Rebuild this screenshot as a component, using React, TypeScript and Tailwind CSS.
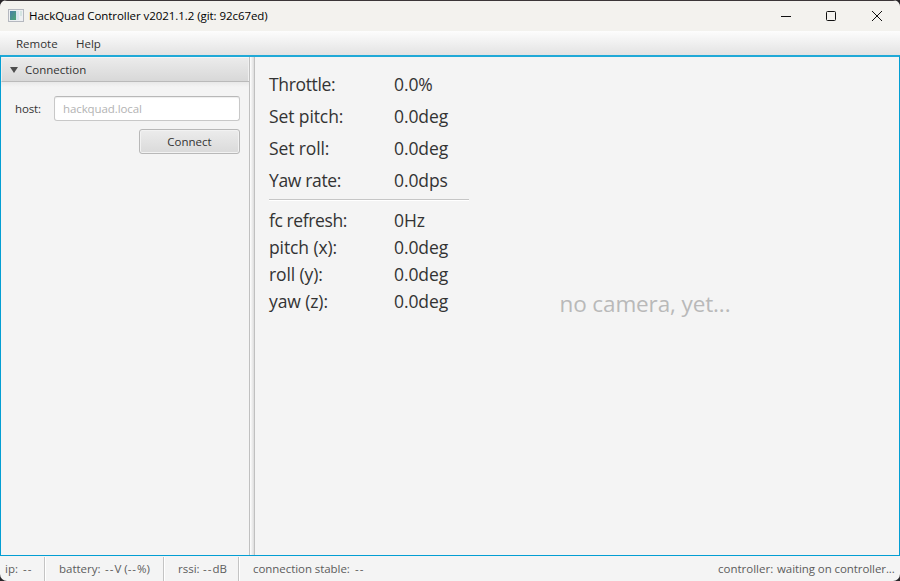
type Row = { label: string; value: string; tracking: string };

const setpoints: Row[] = [
  { label: 'Throttle:', value: '0.0%', tracking: 'tracking-[-0.35px]' },
  { label: 'Set pitch:', value: '0.0deg', tracking: 'tracking-[-0.1px]' },
  { label: 'Set roll:', value: '0.0deg', tracking: 'tracking-[-0.12px]' },
  { label: 'Yaw rate:', value: '0.0dps', tracking: 'tracking-[-0.35px]' },
];

const attitude: Row[] = [
  { label: 'fc refresh:', value: '0Hz', tracking: 'tracking-[-0.4px]' },
  { label: 'pitch (x):', value: '0.0deg', tracking: 'tracking-[-0.1px]' },
  { label: 'roll (y):', value: '0.0deg', tracking: 'tracking-[-0.1px]' },
  { label: 'yaw (z):', value: '0.0deg', tracking: 'tracking-[-0.1px]' },
];

function TitleBar() {
  return (
    <header className="flex h-[31px] shrink-0 items-center border-t border-[#3b3638] bg-[#f3f2ee] text-black">
      <svg className="mb-[2px] ml-2 h-[14px] w-4 shrink-0" viewBox="0 0 16 14">
        <defs>
          <linearGradient id="screen" x1="0" y1="0" x2="1" y2="1">
            <stop offset="0" stopColor="#4a80a8" />
            <stop offset="1" stopColor="#4fa575" />
          </linearGradient>
        </defs>
        <rect x="0.5" y="1.5" width="15" height="12" fill="#eef0f2" stroke="#b5b8bf" />
        <rect x="2" y="3" width="6" height="9" fill="url(#screen)" />
        <rect x="8" y="3" width="3" height="9" fill="#dce6ee" />
        <rect x="12" y="3" width="2" height="5" fill="#d5e5e2" />
      </svg>
      <span className="ml-[5px] text-[11.5px] tracking-[-0.06px]">HackQuad Controller v2021.1.2 (git: 92c67ed)</span>
      <svg className="mr-[17px] mb-px ml-auto h-3 w-[103px] shrink-0" viewBox="0 0 103 12" fill="none" stroke="#111">
        <path d="M1 6.5h10" />
        <rect x="46.5" y="1.5" width="9" height="9" rx="1" />
        <path d="M92 1l10 10M102 1L92 11" />
      </svg>
    </header>
  );
}

function Sidebar() {
  return (
    <aside className="w-[248px] shrink-0">
      <div className="flex h-[25px] items-center border-b border-l border-b-[#bababa] border-l-[#ededed] bg-linear-to-b from-[#ececec] to-[#d8d8d8] pt-px shadow-[inset_0_1px_0_#f5f5f5,inset_-1px_0_0_#f0f0f0]">
        <svg className="ml-2 h-[6px] w-[8px]" viewBox="0 0 8 6">
          <path d="M0 0h8L4 6z" fill="#4d4d4d" />
        </svg>
        <span className="ml-[7px]">Connection</span>
      </div>
      <div className="h-[5px] bg-linear-to-b from-[#e9e9e9] to-[#f4f4f4]" />
      <div className="flex flex-col items-end pt-[9px] pr-[9px]">
        <div className="flex w-full items-center pl-[14px]">
          <label className="w-[39px] tracking-[-0.15px]">host:</label>
          <div className="flex h-[25px] flex-1 items-center rounded-[3px] border border-[#c8c8c8] border-t-[#b8b8b8] bg-white pl-2 tracking-[-0.1px] text-[#b3b3b3] shadow-[inset_0_1px_1px_#eee]">
            hackquad.local
          </div>
        </div>
        <button className="mt-[8px] h-[25px] w-[101px] rounded-[3px] border border-[#b8b8b8] bg-linear-to-b from-[#ececec] to-[#dadada] shadow-[inset_0_0_0_1px_#f2f2f2]">
          Connect
        </button>
      </div>
    </aside>
  );
}

function Readings({ rows, rowClass }: { rows: Row[]; rowClass: string }) {
  return (
    <>
      {rows.map((row) => (
        <div key={row.label} className={`flex items-center ${rowClass}`}>
          <span className={`w-[125px] ${row.tracking}`}>{row.label}</span>
          <span className="tracking-[-0.1px]">{row.value}</span>
        </div>
      ))}
    </>
  );
}

function Separator() {
  return <div className="h-[24px] w-[2px] shrink-0 border-l border-[#c4c4c4] bg-white" />;
}

function StatusBar() {
  return (
    <footer className="flex h-[25px] shrink-0 items-center border-t border-[#f4f4f4] text-[#5c5c5c]">
      <div className="flex w-[44px] pl-[5px]">
        <span className="w-[18px]">ip:</span>
        <span className="tracking-[1px]">--</span>
      </div>
      <Separator />
      <div className="flex w-[117px] pl-[13px]">
        <span className="w-[46px]">battery:</span>
        <span>
          <span className="tracking-[1px]">--</span>V (<span className="tracking-[1px]">--</span>%)
        </span>
      </div>
      <Separator />
      <div className="flex w-[73px] pl-[13px]">
        <span className="w-[25px]">rssi:</span>
        <span>
          <span className="tracking-[1px]">--</span>dB
        </span>
      </div>
      <Separator />
      <div className="flex pl-[13px]">
        <span className="w-[102px] tracking-[-0.06px]">connection stable:</span>
        <span className="tracking-[1px]">--</span>
      </div>
      <div className="ml-auto flex w-[182px]">
        <span className="w-[59px]">controller:</span>
        <span className="tracking-[-0.08px]">waiting on controller...</span>
      </div>
    </footer>
  );
}

export default function App() {
  return (
    <div className="h-[581px] w-[900px] bg-[#292629]">
      <div className="flex h-full flex-col overflow-hidden rounded-[7px] bg-[#f4f4f4] font-['Open_Sans',sans-serif] text-[11.5px] leading-4 whitespace-nowrap text-[#333]">
        <TitleBar />
        <nav className="flex h-[24px] shrink-0 items-center bg-linear-to-b from-[#fdfdfd] to-[#e3e3e3] pt-[2px] pl-4">
          <span className="w-[60px]">Remote</span>
          <span>Help</span>
        </nav>
        <main className="flex h-[501px] shrink-0 border border-t-2 border-[#039ed3] border-t-[#20a9d7]">
          <Sidebar />
          <div className="w-[6px] shrink-0 border-x border-[#c0c0c0] bg-linear-to-r from-white to-[#dcdcdc]" />
          <section className="w-[214px] shrink-0 pt-[11px] pl-[14px] text-[17.5px]">
            <Readings rows={setpoints} rowClass="h-8" />
            <div className="mt-[3px] mb-[5px] h-[2px] border-t border-[#c6c6c6] bg-white" />
            <Readings rows={attitude} rowClass="h-[27px]" />
          </section>
          <section className="flex flex-1 items-center justify-center pr-[78px] pb-[5px] text-[22.5px] tracking-[-0.12px] text-[#b9b9b9]">
            <span>no camera, yet...</span>
          </section>
        </main>
        <StatusBar />
      </div>
    </div>
  );
}
